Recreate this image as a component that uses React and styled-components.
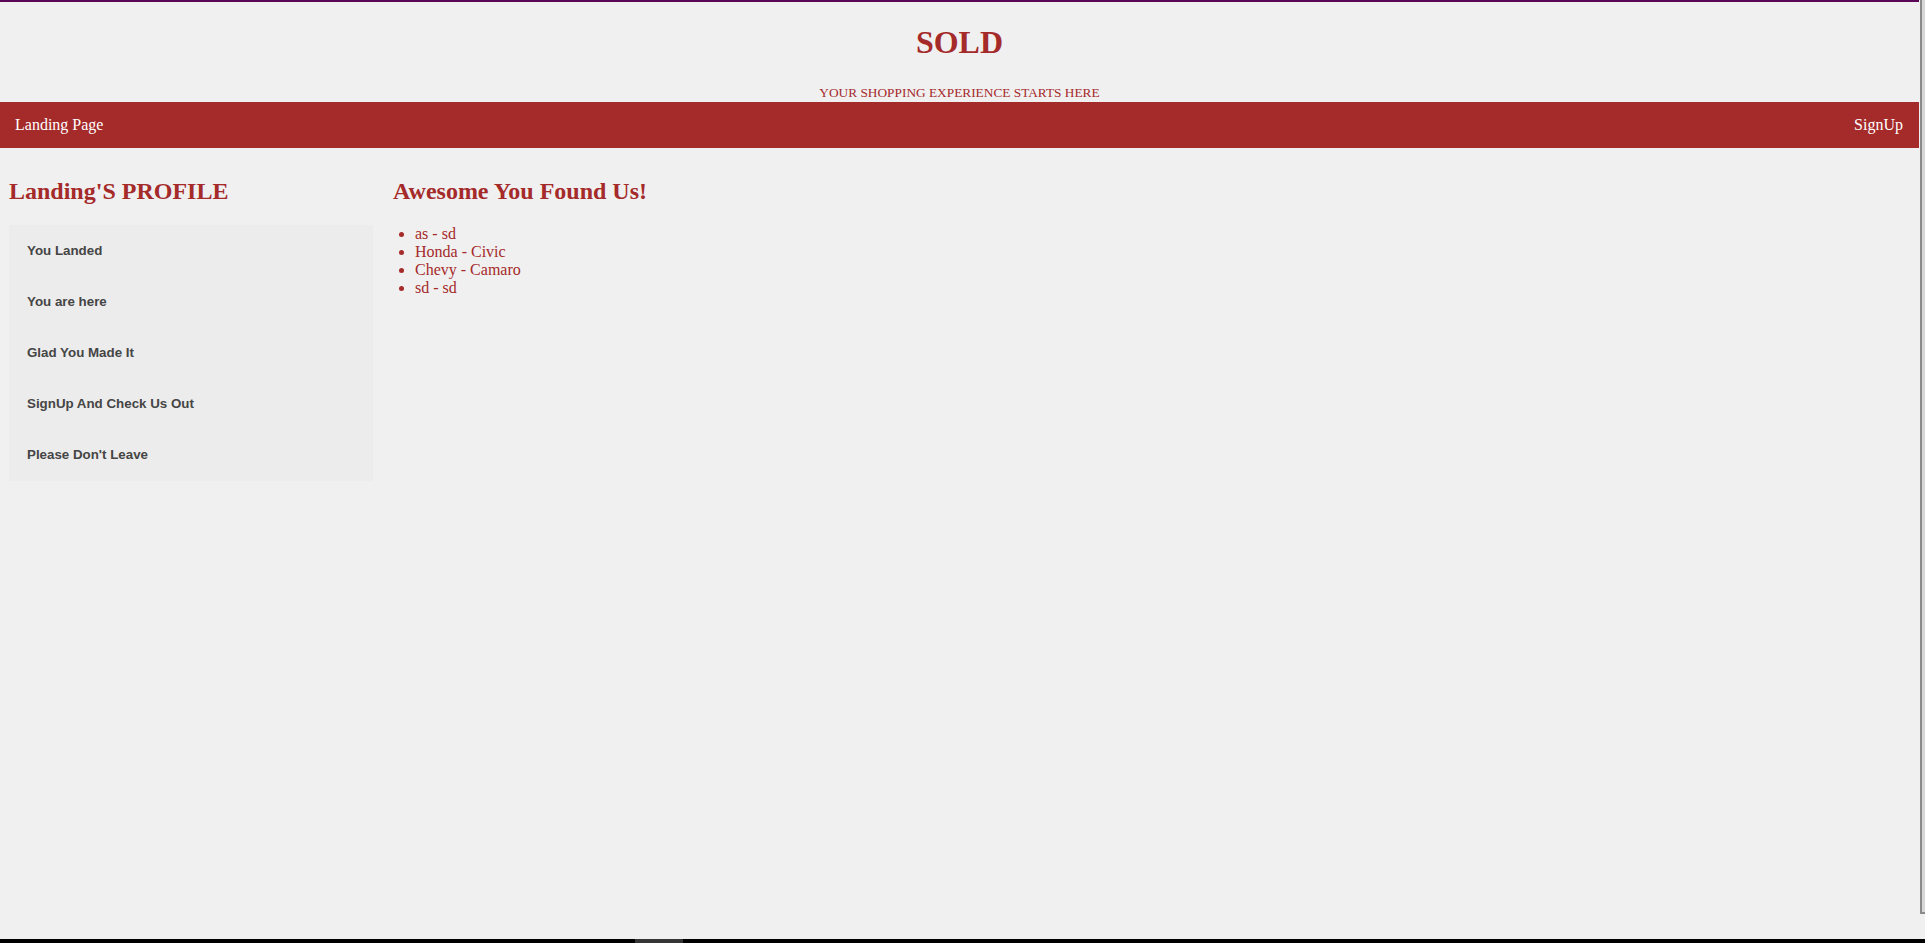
import React from "react";
import styled, { createGlobalStyle } from "styled-components";

const brown = "#a52a2a";
const pageBg = "#f0f0f0";

const GlobalStyle = createGlobalStyle`
  html, body {
    margin: 0;
    padding: 0;
    background: ${pageBg};
    overflow: hidden;
  }
  body {
    font-family: "Liberation Serif", "Times New Roman", serif;
  }
`;

export default function App() {
  const sideLinks = [
    "You Landed",
    "You are here",
    "Glad You Made It",
    "SignUp And Check Us Out",
    "Please Don't Leave",
  ];
  const cars = [
    { make: "as", model: "sd" },
    { make: "Honda", model: "Civic" },
    { make: "Chevy", model: "Camaro" },
    { make: "sd", model: "sd" },
  ];

  return (
    <Screen>
      <GlobalStyle />
      <Window>
        <Page>
          <Header>
            <h1>SOLD</h1>
            <p>YOUR SHOPPING EXPERIENCE STARTS HERE</p>
          </Header>
          <Nav>
            <NavLink>Landing Page</NavLink>
            <NavLink>SignUp</NavLink>
          </Nav>
          <Content>
            <Sidebar>
              <Heading>Landing'S PROFILE</Heading>
              <SideMenu>
                {sideLinks.map((link) => (
                  <SideItem key={link}>{link}</SideItem>
                ))}
              </SideMenu>
            </Sidebar>
            <Main>
              <Heading>Awesome You Found Us!</Heading>
              <CarList>
                {cars.map((car, i) => (
                  <li key={i}>
                    {car.make} - {car.model}
                  </li>
                ))}
              </CarList>
            </Main>
          </Content>
        </Page>
        <Edge>
          <div className="track"></div>
        </Edge>
      </Window>
      <Taskbar>
        <span></span>
      </Taskbar>
    </Screen>
  );
}

const Screen = styled.div`
  display: flex;
  flex-direction: column;
  width: 1925px;
  height: 943px;
`;

const Window = styled.div`
  flex: 1;
  display: flex;
  min-height: 0;
`;

const Page = styled.div`
  width: 1919px;
  border-top: 2px solid #5b0657;
  display: flex;
  flex-direction: column;
`;

const Header = styled.header`
  text-align: center;
  color: ${brown};
  h1 {
    margin: 0;
    padding-top: 22px;
    font-size: 32px;
    line-height: 37px;
    font-weight: bold;
  }
  p {
    margin: 24px 0 2px;
    font-size: 13.33px;
    line-height: 15px;
  }
`;

const Nav = styled.nav`
  display: flex;
  justify-content: space-between;
  align-items: center;
  height: 46px;
  padding: 0 16px 0 15px;
  background: ${brown};
`;

const NavLink = styled.a`
  color: #ffffff;
  font-size: 16px;
  line-height: 18px;
  text-decoration: none;
  cursor: pointer;
`;

const Content = styled.div`
  display: grid;
  grid-template-columns: 364px 1fr;
  column-gap: 20px;
  padding: 9px 0 0 9px;
`;

const Sidebar = styled.aside`
  display: flex;
  flex-direction: column;
`;

const Heading = styled.h2`
  margin: 20px 0;
  color: ${brown};
  font-size: 24px;
  line-height: 28px;
  font-weight: bold;
`;

const SideMenu = styled.div`
  background: #ececec;
  display: flex;
  flex-direction: column;
  padding-top: 1px;
`;

const SideItem = styled.a`
  padding: 17px 18px 18px;
  font-family: "Liberation Sans", Arial, sans-serif;
  font-size: 13.33px;
  line-height: 16px;
  font-weight: bold;
  color: #454545;
  cursor: pointer;
`;

const Main = styled.main`
  display: flex;
  flex-direction: column;
`;

const CarList = styled.ul`
  margin: 0;
  padding-left: 22px;
  color: ${brown};
  font-size: 16px;
  line-height: 18px;
`;

const Edge = styled.div`
  flex: 1;
  display: flex;
  flex-direction: column;
  background: ${pageBg};
  .track {
    height: 912px;
    margin-left: 1px;
    border-left: 2px solid #8a8a8a;
    border-bottom: 2px solid #8a8a8a;
    background: #d6d6d6;
  }
`;

const Taskbar = styled.div`
  height: 4px;
  background: #000000;
  span {
    display: block;
    margin-left: 635px;
    width: 48px;
    height: 4px;
    background: #353535;
  }
`;
